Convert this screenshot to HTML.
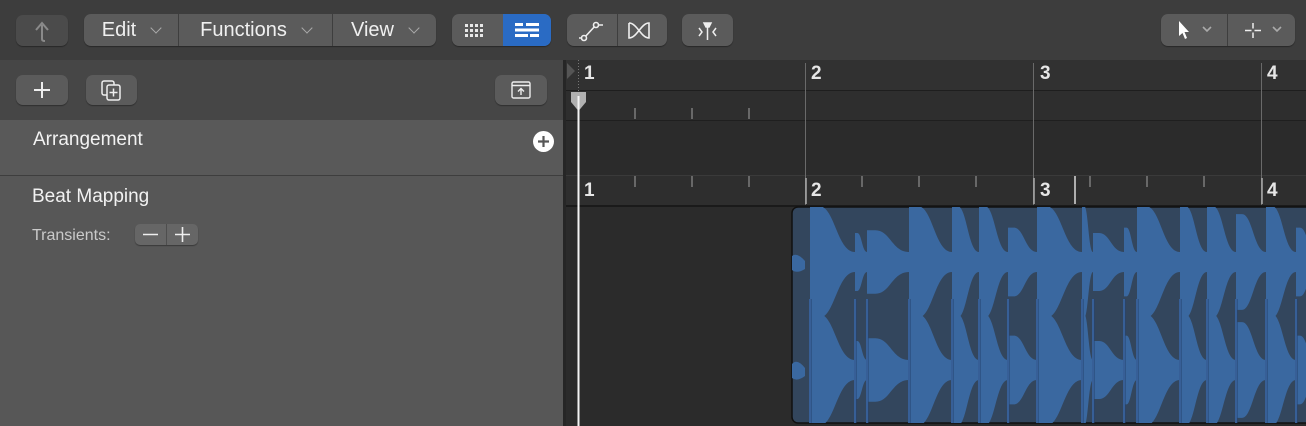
<!DOCTYPE html>
<html><head><meta charset="utf-8"><style>
*{margin:0;padding:0;box-sizing:border-box}
body{width:1306px;height:426px;overflow:hidden;background:#3c3c3c;font-family:"Liberation Sans",sans-serif;position:relative}
.tb{position:absolute;left:0;top:0;width:1306px;height:60px;background:#3d3d3d}
.btn{position:absolute;background:#5b5b5b;border-radius:7px;box-shadow:0 1px 1px rgba(0,0,0,.35);color:#f0f0f0}
.seg{position:absolute;top:0;bottom:0;display:flex;align-items:center;justify-content:center;font-size:20px}
.div{position:absolute;top:0;bottom:0;width:1px;background:#3e3e3e}
.chev{display:inline-block;width:8px;height:8px;border-right:1.6px solid #aaa;border-bottom:1.6px solid #aaa;transform:rotate(45deg);margin-left:16px;margin-top:-5px}
.left{position:absolute;left:0;top:60px;width:563px;height:366px;background:#464646}
.txt{position:absolute;color:#f2f2f2}
</style></head><body>
<div class="tb">
 <div class="btn" style="left:16px;top:15px;width:52px;height:31px;background:#4b4b4b">
  <svg width="52" height="31" style="position:absolute;left:0;top:0"><path d="M26 24 V10 M20 15 L26 8 L32 15" stroke="#8a8a8a" stroke-width="2" fill="none"/><path d="M26 24 q0 2 3 2" stroke="#8a8a8a" stroke-width="2" fill="none"/></svg>
 </div>
 <div class="btn" style="left:84px;top:14px;width:352px;height:32px">
  <div class="seg" style="left:0;width:94px">Edit<span class="chev"></span></div>
  <div class="div" style="left:94px"></div>
  <div class="seg" style="left:95px;width:153px">Functions<span class="chev"></span></div>
  <div class="div" style="left:248px"></div>
  <div class="seg" style="left:249px;width:103px">View<span class="chev"></span></div>
 </div>
 <div class="btn" style="left:452px;top:14px;width:99px;height:32px;overflow:hidden">
  <svg width="99" height="32" style="position:absolute;left:0;top:0">
   <g fill="#e8e8e8"><rect x="13" y="10" width="3" height="3"/><rect x="18" y="10" width="3" height="3"/><rect x="23" y="10" width="3" height="3"/><rect x="28" y="10" width="3" height="3"/><rect x="13" y="15" width="3" height="3"/><rect x="18" y="15" width="3" height="3"/><rect x="23" y="15" width="3" height="3"/><rect x="28" y="15" width="3" height="3"/><rect x="13" y="20" width="3" height="3"/><rect x="18" y="20" width="3" height="3"/><rect x="23" y="20" width="3" height="3"/><rect x="28" y="20" width="3" height="3"/></g>
   <rect x="51" y="0" width="48" height="32" fill="#2a6bc4"/>
   <g fill="#fff"><rect x="63" y="9" width="8" height="3"/><rect x="63" y="14.5" width="24" height="3"/><rect x="74" y="9" width="13" height="3"/><rect x="63" y="20" width="13" height="3"/><rect x="78" y="20" width="9" height="3"/></g>
  </svg>
 </div>
 <div class="btn" style="left:567px;top:14px;width:100px;height:32px">
  <svg width="100" height="32" style="position:absolute;left:0;top:0" fill="none" stroke="#eee" stroke-width="1.6">
   <path d="M12 24 L17 24 L29 11 L36 11"/><circle cx="17" cy="24" r="2.5" fill="#5b5b5b"/><circle cx="29" cy="11" r="2.5" fill="#5b5b5b"/>
   <path d="M62 9 V24 C70 24 74 9 82 9 V24 C74 24 70 9 62 9"/>
  </svg>
  <div class="div" style="left:50px"></div>
 </div>
 <div class="btn" style="left:682px;top:14px;width:51px;height:32px">
  <svg width="51" height="32" style="position:absolute;left:0;top:0" fill="none" stroke="#eee" stroke-width="1.5">
   <path d="M22 9 h7 l-2 4 h-3 z" fill="#eee"/><path d="M25.5 13 V26"/><path d="M17 14 l3 4 l-3 4 M34 14 l-3 4 l3 4"/>
  </svg>
 </div>
 <div class="btn" style="left:1161px;top:14px;width:134px;height:32px">
  <svg width="134" height="32" style="position:absolute;left:0;top:0">
   <path d="M18 7 L18 22 L21.5 19 L24 25 L26 24 L23.5 18 L28 18 Z" fill="#fff"/>
   <path d="M42 13 l4 4 l4 -4 M112 13 l4 4 l4 -4" stroke="#aaa" stroke-width="1.6" fill="none"/>
   <path d="M92 9 V24 M84 16.5 H100" stroke="#eee" stroke-width="1.5"/><rect x="90.5" y="14.5" width="3" height="4" fill="#5b5b5b"/>
  </svg>
  <div class="div" style="left:66px"></div>
 </div>
</div>

<div class="left">
 <div class="btn" style="left:16px;top:15px;width:52px;height:30px"><svg width="52" height="30" style="position:absolute"><path d="M26 7 V23 M18 15 H34" stroke="#eee" stroke-width="2"/></svg></div>
 <div class="btn" style="left:86px;top:15px;width:51px;height:30px"><svg width="51" height="30" style="position:absolute" fill="none" stroke="#eee" stroke-width="1.5"><rect x="16" y="6" width="12" height="14" rx="2"/><rect x="21" y="10" width="13" height="15" rx="2" fill="#5b5b5b"/><path d="M27.5 13.5 V21.5 M23.5 17.5 H31.5"/></svg></div>
 <div class="btn" style="left:495px;top:15px;width:52px;height:30px"><svg width="52" height="30" style="position:absolute" fill="none" stroke="#eee" stroke-width="1.4"><rect x="17" y="7" width="18" height="16" rx="1.5"/><path d="M17 10.5 H35"/><path d="M26 20 V13.5 M23 16.5 L26 13.5 L29 16.5"/></svg></div>
 <div style="position:absolute;left:0;top:60px;width:563px;height:55px;background:#595959"></div>
 <div style="position:absolute;left:0;top:115px;width:563px;height:1px;background:#3e3e3e"></div>
 <div style="position:absolute;left:0;top:116px;width:563px;height:250px;background:#575757"></div>
 <div class="txt" style="left:33px;top:69px;font-size:19px">Arrangement</div>
 <div style="position:absolute;left:533px;top:71px;width:21px;height:21px;border-radius:50%;background:#fff"><svg width="21" height="21" style="position:absolute"><path d="M10.5 5 V16 M5 10.5 H16" stroke="#575757" stroke-width="2.2"/></svg></div>
 <div class="txt" style="left:32px;top:126px;font-size:19px">Beat Mapping</div>
 <div class="txt" style="left:32px;top:167px;font-size:16px;color:#cacaca">Transients:</div>
 <div class="btn" style="left:135px;top:164px;width:63px;height:21px;background:#666;border-radius:5px">
  <svg width="63" height="21" style="position:absolute"><path d="M8 10.5 H23 M40 10.5 H55 M47.5 3 V18" stroke="#eee" stroke-width="1.6"/><path d="M31.5 0 V21" stroke="#4e4e4e"/></svg>
 </div>
</div>

<svg width="743" height="366" style="position:absolute;left:563px;top:60px">
 <rect x="0" y="0" width="743" height="366" fill="#2b2b2b"/>
 <rect x="0" y="0" width="3" height="366" fill="#262626"/>
 <rect x="3" y="0" width="740" height="30" fill="#313131"/>
 <rect x="3" y="30" width="740" height="1" fill="#1e1e1e"/>
 <rect x="3" y="31" width="740" height="29" fill="#2e2e2e"/>
 <rect x="3" y="60" width="740" height="1" fill="#1f1f1f"/>
 <rect x="3" y="61" width="740" height="54" fill="#2b2b2b"/>
 <rect x="3" y="115" width="740" height="1" fill="#3a3a3a"/>
 <rect x="3" y="116" width="740" height="29" fill="#2e2e2e"/>
 <rect x="3" y="145" width="740" height="2" fill="#1a1a1a"/>
 <path d="M4 3 L12 11 L4 19 Z" fill="#555"/>
 <g stroke="#888" stroke-width="1.3">
  <path d="M72 48 V59 M129 48 V59 M186 48 V59"/>
  <path d="M72 116 V127 M129 116 V127 M186 116 V127 M299 116 V127 M356 116 V127 M413 116 V127 M527 116 V127 M584 116 V127 M641 116 V127"/>
 </g>
 <g stroke="#6a6a6a" stroke-width="1"><path d="M242.5 3 V145 M470.5 3 V145 M698.5 3 V145"/></g>
 <g stroke="#aaa" stroke-width="1.5"><path d="M243 118 V144 M471 118 V144 M699 118 V144"/></g>
 <path d="M512 116 V144" stroke="#d8d8d8" stroke-width="1.5"/>
 <g fill="#e6e6e6" font-size="19" font-weight="bold" font-family="Liberation Sans, sans-serif">
  <text x="21" y="19">1</text><text x="248" y="19">2</text><text x="477" y="19">3</text><text x="704" y="19">4</text>
  <text x="21" y="136">1</text><text x="248" y="136">2</text><text x="477" y="136">3</text><text x="704" y="136">4</text>
 </g>
 <path d="M15.5 0 V33" stroke="#777" stroke-dasharray="1 2"/>
 <path d="M8 32 h15 v10 l-7.5 9 l-7.5 -9 z" fill="#b0b0b0"/>
 <path d="M15.5 36 V366" stroke="#f4f4f4" stroke-width="2"/>
</svg>

<svg width="516" height="219" style="position:absolute;left:791px;top:206px">
 <defs><clipPath id="c"><rect x="1" y="1" width="520" height="216" rx="6"/></clipPath></defs>
 <rect x="1" y="1" width="520" height="216" rx="6" fill="#33465d" stroke="#111" stroke-width="1.5"/>
 <g clip-path="url(#c)" fill="#3a68a0">
  <path d="M1 50 Q6 46 14 55 L14 63 Q6 68 1 64 Z M1 158 Q6 152 14 162 L14 170 Q6 176 1 172 Z"/>
 </g>
 <g clip-path="url(#c)" fill="#3a68a0" id="w"></g>
 <g id="t"></g>
</svg>
<script>
(function(){
 var hits=[[19,1],[64,.5],[76,.55],[118,1],[161,1],[188,1],[217,.6],[246,1],[291,1],[302,.5],[333,.6],[346,1],[389,1],[416,1],[445,.85],[475,1],[505,.6],[525,1]];
 var g=document.getElementById('w'),t=document.getElementById('t'),s='',ts='';
 var cs=[56,164];
 for(var i=0;i<hits.length-1;i++){
  var x0=hits[i][0],x1=hits[i+1][0],a=hits[i][1],d=x1-x0;
  cs.forEach(function(c){
   var h=54*a+2,f=10;
   s+='<path d="M'+x0+' '+(c-h)+' L'+(x0+d*0.2)+' '+(c-h)+' C'+(x0+d*0.55)+' '+(c-h)+' '+(x0+d*0.6)+' '+(c-f)+' '+(x1)+' '+(c-f)+' L'+x1+' '+(c+f)+' C'+(x0+d*0.6)+' '+(c+f)+' '+(x0+d*0.55)+' '+(c+h)+' '+(x0+d*0.2)+' '+(c+h)+' L'+x0+' '+(c+h)+' Z"/>';
  });
  ts+='<rect x="'+(x0-1)+'" y="93" width="2.5" height="124" fill="#24426e"/><rect x="'+(x0-0.5)+'" y="93" width="1" height="124" fill="#4a7cc0"/>';
 }
 g.innerHTML=s;t.innerHTML=ts;
})();
</script>
</body></html>
